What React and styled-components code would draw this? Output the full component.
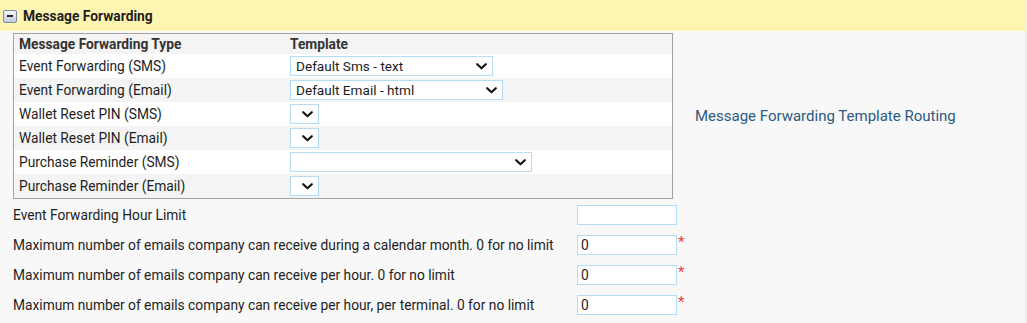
import React from "react";
import styled, { createGlobalStyle } from "styled-components";

const Global = createGlobalStyle`
  html, body { margin: 0; padding: 0; background: #eeeeee; }
  body { font-family: Roboto, "Liberation Sans", Arial, sans-serif; color: #1e1e1e; }
  * { box-sizing: border-box; }
`;

const Page = styled.div`
  width: 1025px;
  min-height: 323px;
  background: #f8f8f8;
`;

const SectionHeader = styled.div`
  height: 31px;
  background: #fff5b2;
  display: flex;
  align-items: center;
  padding-left: 3px;
  gap: 6px;
`;

const Toggle = styled.span`
  width: 14px;
  height: 13px;
  border: 1px solid #7d8ca0;
  border-radius: 2px;
  background: linear-gradient(#f4f6f9, #c4ccd8);
  display: flex;
  align-items: center;
  justify-content: center;
  margin-top: 1px;
  &::before {
    content: "";
    width: 6px;
    height: 2px;
    background: #2a2a2a;
  }
`;

const HeaderTitle = styled.h2`
  margin: 0;
  font-size: 13.8px;
  font-weight: 700;
  color: #1e1e1e;
`;

const Body = styled.div`
  padding: 2px 0 0 13px;
`;

const TopRow = styled.div`
  display: flex;
  align-items: center;
  gap: 22px;
`;

const TemplateTable = styled.div`
  width: 660px;
  border: 1px solid #a3a3a3;
  display: flex;
  flex-direction: column;
`;

const Row = styled.div`
  display: grid;
  grid-template-columns: 271px 1fr;
  align-items: center;
  height: ${(p) => (p.$head ? 20 : 24)}px;
  background: ${(p) => (p.$shade ? "#f4f4f4" : "#ffffff")};
  padding-left: 5px;
  font-size: 13.75px;
  font-weight: ${(p) => (p.$head ? 700 : 400)};
  color: ${(p) => (p.$head ? "#333" : "#1e1e1e")};
`;

const SelectWrap = styled.div`
  position: relative;
  width: ${(p) => p.$w}px;
  height: 20px;
`;

const Select = styled.select`
  appearance: none;
  -webkit-appearance: none;
  width: 100%;
  height: 100%;
  border: 1px solid #b2dcf7;
  border-radius: 0;
  background: #ffffff;
  font-family: Roboto, "Liberation Sans", Arial, sans-serif;
  font-size: 13.6px;
  color: #1e1e1e;
  padding: 0 20px 0 5px;
  outline: none;
`;

const Chevron = styled.svg`
  position: absolute;
  right: 6px;
  top: 7px;
  width: 11px;
  height: 7px;
  pointer-events: none;
`;

const Description = styled.div`
  font-size: 15px;
  color: #2d5a82;
`;

const Settings = styled.div`
  margin-top: 1px;
  display: flex;
  flex-direction: column;
`;

const SettingRow = styled.div`
  display: grid;
  grid-template-columns: 564px auto auto;
  justify-content: start;
  align-items: center;
  height: 30px;
  font-size: 13.75px;
  color: #1e1e1e;
`;

const TextInput = styled.input`
  width: 100px;
  height: 20px;
  border: 1px solid #b2dcf7;
  background: #ffffff;
  font-family: Roboto, "Liberation Sans", Arial, sans-serif;
  font-size: 13.75px;
  color: #1e1e1e;
  padding: 0 3px;
  outline: none;
`;

const Required = styled.span`
  align-self: start;
  margin-top: 5px;
  margin-left: 1px;
  color: #ee3b3b;
  font-size: 15px;
  line-height: 1;
`;

function TemplateSelect({ width, value }) {
  return (
    <SelectWrap $w={width}>
      <Select defaultValue={value || ""}>
        <option value={value || ""}>{value || ""}</option>
      </Select>
      <Chevron viewBox="0 0 11 7">
        <polyline points="1.2,1.2 5.5,5.3 9.8,1.2" fill="none" stroke="#111" strokeWidth="2.1" strokeLinecap="round" strokeLinejoin="round" />
      </Chevron>
    </SelectWrap>
  );
}

const templates = [
  { type: "Event Forwarding (SMS)", w: 203, v: "Default Sms - text" },
  { type: "Event Forwarding (Email)", w: 213, v: "Default Email - html" },
  { type: "Wallet Reset PIN (SMS)", w: 29, v: "" },
  { type: "Wallet Reset PIN (Email)", w: 29, v: "" },
  { type: "Purchase Reminder (SMS)", w: 242, v: "" },
  { type: "Purchase Reminder (Email)", w: 29, v: "" },
];

const settings = [
  { label: "Event Forwarding Hour Limit", value: "", req: false },
  { label: "Maximum number of emails company can receive during a calendar month. 0 for no limit", value: "0", req: true },
  { label: "Maximum number of emails company can receive per hour. 0 for no limit", value: "0", req: true },
  { label: "Maximum number of emails company can receive per hour, per terminal. 0 for no limit", value: "0", req: true },
];

export default function App() {
  return (
    <Page>
      <Global />
      <SectionHeader>
        <Toggle />
        <HeaderTitle>Message Forwarding</HeaderTitle>
      </SectionHeader>
      <Body>
        <TopRow>
          <TemplateTable>
            <Row $head $shade>
              <span>Message Forwarding Type</span>
              <span>Template</span>
            </Row>
            {templates.map((t, i) => (
              <Row key={t.type} $shade={i % 2 === 1}>
                <span>{t.type}</span>
                <TemplateSelect width={t.w} value={t.v} />
              </Row>
            ))}
          </TemplateTable>
          <Description>Message Forwarding Template Routing</Description>
        </TopRow>
        <Settings>
          {settings.map((s) => (
            <SettingRow key={s.label}>
              <span>{s.label}</span>
              <TextInput defaultValue={s.value} />
              {s.req ? <Required>*</Required> : <span />}
            </SettingRow>
          ))}
        </Settings>
      </Body>
    </Page>
  );
}
